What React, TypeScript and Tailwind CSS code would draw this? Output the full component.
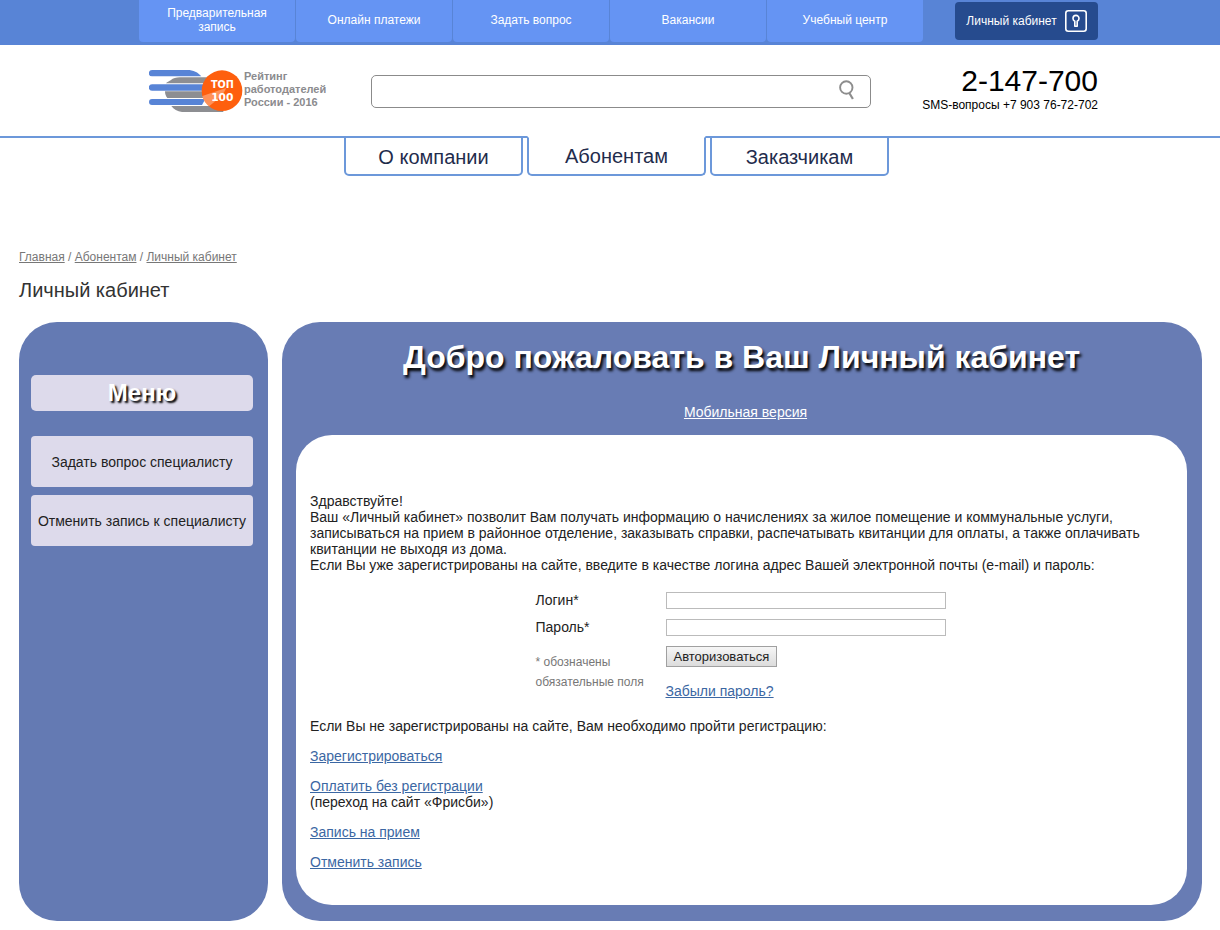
import { useState } from "react";

const topLinks = [
  "Предварительная запись",
  "Онлайн платежи",
  "Задать вопрос",
  "Вакансии",
  "Учебный центр",
];

const tabs = [
  { title: "О компании", active: false },
  { title: "Абонентам", active: true },
  { title: "Заказчикам", active: false },
];

const sideMenu = ["Задать вопрос специалисту", "Отменить запись к специалисту"];

const TopBar = () => (
  <div className="bg-[#5884d6] pl-4">
    <div className="max-w-[960px] h-[45px] mx-auto pl-px flex items-start">
      <nav className="flex flex-1 gap-px mr-8">
        {topLinks.map((link) => (
          <a
            key={link}
            href="#"
            className="flex-1 h-[42px] px-4 pb-[2px] flex items-center justify-center text-center text-xs leading-[14px] text-white bg-[#6594f3] rounded-b"
          >
            {link}
          </a>
        ))}
      </nav>
      <a
        href="#"
        className="w-[143px] h-[38px] mt-[2px] flex items-center justify-center gap-2 rounded bg-[#264b8e] text-white text-xs"
      >
        Личный кабинет
        <svg width="22" height="22" viewBox="0 0 22 22" fill="none" stroke="#fff">
          <rect x="0.8" y="0.8" width="20.4" height="20.4" rx="2.5" strokeWidth="1.6" />
          <path
            d="M9.8 16.2V11.2C8.6 10.5 8 9.6 8 8.4a3 3 0 0 1 6 0c0 1.2-.6 2.1-1.8 2.8v5z"
            strokeWidth="1.6"
            strokeLinejoin="round"
          />
        </svg>
      </a>
    </div>
  </div>
);

const Logo = () => (
  <a href="#" className="flex items-center text-[#8b8b8e]">
    <svg width="95" height="45" viewBox="27 27 285 135">
      <path
        d="M92 61C100 54 108 52 120 52H230V70H78C82 66 86 64 92 61zM75 94H230V114H82C77 108 75 102 75 94zM94 138H250V156H126C112 154 101 148 94 138z"
        fill="#8d8e92"
      />
      <path
        d="M36 30H142C160 30 174 37 184 49H36A9 9 0 0 1 36 30zM36 73H200V92H36A9 9 0 0 1 36 73zM36 117H196L186 135H36A9 9 0 0 1 36 117z"
        fill="#5884d6"
      />
      <circle cx="246" cy="92" r="61" fill="#fe5f0e" />
      <path d="M187 108L258 84C254 100 240 112 207 139C196 130 190 121 187 108z" fill="#ffb48c" opacity="0.6" />
      <g fill="#fff" fontFamily="DejaVu Sans, sans-serif" fontWeight="700" textAnchor="middle">
        <text x="247" y="85" fontSize="29">ТОП</text>
        <text x="247" y="122" fontSize="32">100</text>
      </g>
    </svg>
    <span className="w-[83px] pb-1 font-bold text-[11px] leading-[13px] whitespace-nowrap">
      Рейтинг
      <br />
      работодателей
      <br />
      России - 2016
    </span>
  </a>
);

const Header = () => {
  const [query, setQuery] = useState("");

  return (
    <header className="pl-4 border-b-2 border-[#6c98da]">
      <div className="max-w-[960px] h-[91px] mx-auto pl-[11px] pt-[2px] flex items-center">
        <Logo />
        <form
          role="search"
          onSubmit={(e) => e.preventDefault()}
          className="flex flex-1 h-[33px] ml-11 mr-[51px] border border-[#8b8b8b] rounded-[5px]"
        >
          <input
            type="search"
            aria-label="Поиск"
            value={query}
            onChange={(e) => setQuery(e.target.value)}
            className="flex-1 min-w-0 px-2 text-sm outline-none"
          />
          <button type="submit" aria-label="Найти" className="px-[15px] pb-1">
            <svg width="16" height="20" viewBox="0 0 16 20" fill="none" stroke="#8d8d8d">
              <circle cx="7.3" cy="7.5" r="6.2" strokeWidth="1.9" />
              <path d="M10.3 13l3.6 6" strokeWidth="2.2" />
            </svg>
          </button>
        </form>
        <div className="pb-[5px] text-right text-black whitespace-nowrap">
          <div className="text-[30px] leading-8">2-147-700</div>
          <div className="text-xs">SMS-вопросы +7 903 76-72-702</div>
        </div>
      </div>
    </header>
  );
};

const SectionTabs = () => (
  <nav className="flex justify-center gap-1 pl-[13px] -mt-[2px]">
    {tabs.map((tab) => (
      <a
        key={tab.title}
        href="#"
        className={
          tab.active
            ? "w-[179px] h-10 flex items-center justify-center text-xl text-[#1f2c4c] bg-white border-2 border-t-white border-[#6c98da] rounded-b-[5px]"
            : "w-[179px] h-10 pt-[2px] flex items-center justify-center text-xl text-[#1f2c4c] border-2 border-[#6c98da] rounded-b-[5px]"
        }
      >
        {tab.title}
      </a>
    ))}
  </nav>
);

const Sidebar = () => (
  <aside className="w-[249px] shrink-0 pl-3 pr-[15px] pt-[53px] rounded-[38px] bg-[#647ab3]">
    <h2 className="h-9 mb-[25px] flex items-center justify-center rounded-[5px] bg-[#dddaeb] text-white text-2xl font-bold [text-shadow:2px_2px_2px_#000]">
      Меню
    </h2>
    <div className="flex flex-col gap-2">
      {sideMenu.map((item) => (
        <a
          key={item}
          href="#"
          className="h-[51px] flex items-center justify-center whitespace-nowrap rounded bg-[#dddaeb] text-sm text-[#222]"
        >
          {item}
        </a>
      ))}
    </div>
  </aside>
);

const LoginForm = () => {
  const [formData, setFormData] = useState({ login: "", password: "" });

  const handleChange = (e: React.ChangeEvent<HTMLInputElement>) => {
    const { name, value } = e.target;
    setFormData((prev) => ({ ...prev, [name]: value }));
  };

  return (
    <form
      onSubmit={(e) => e.preventDefault()}
      className="grid grid-cols-[110px_280px] justify-center gap-x-5 gap-y-[10px] my-[19px]"
    >
      <label htmlFor="login">Логин*</label>
      <input
        id="login"
        type="text"
        name="login"
        value={formData.login}
        onChange={handleChange}
        className="h-[17px] px-1 border border-[#bbb]"
      />
      <label htmlFor="password">Пароль*</label>
      <input
        id="password"
        type="password"
        name="password"
        value={formData.password}
        onChange={handleChange}
        className="h-[17px] px-1 border border-[#bbb]"
      />
      <p className="pt-[6px] text-xs leading-5 text-[#777] whitespace-nowrap">
        * обозначены
        <br />
        обязательные поля
      </p>
      <div className="flex flex-col items-start gap-4">
        <button
          type="submit"
          className="h-[21px] px-[7px] border border-[#a0a0a0] bg-linear-to-b from-[#f6f6f6] to-[#dcdcdc] text-[13px] leading-4"
        >
          Авторизоваться
        </button>
        <a href="#" className="text-[#3b67a3] underline">
          Забыли пароль?
        </a>
      </div>
    </form>
  );
};

const Cabinet = () => (
  <main className="flex-1 min-w-0 pl-[14px] pr-[15px] pb-4 rounded-[38px] bg-[#687cb4] text-sm leading-4">
    <h2 className="pt-3 text-center text-white text-[32px] leading-[46px] font-bold [text-shadow:2px_3px_3px_#000]">
      Добро пожаловать в Ваш Личный кабинет
    </h2>
    <p className="mt-6 mb-[15px] pl-2 text-center">
      <a href="#" className="text-white underline">
        Мобильная версия
      </a>
    </p>
    <div className="pl-[14px] pr-4 pt-[58px] pb-[35px] rounded-[36px] bg-white text-[#222]">
      <p>
        Здравствуйте!
        <br />
        Ваш «Личный кабинет» позволит Вам получать информацию о начислениях за жилое помещение и
        коммунальные услуги, записываться на прием в районное отделение, заказывать справки,
        распечатывать квитанции для оплаты, а также оплачивать квитанции не выходя из дома.
        <br />
        Если Вы уже зарегистрированы на сайте, введите в качестве логина адрес Вашей электронной
        почты (e-mail) и пароль:
      </p>
      <LoginForm />
      <div className="flex flex-col gap-[14px]">
        <p>Если Вы не зарегистрированы на сайте, Вам необходимо пройти регистрацию:</p>
        <p>
          <a href="#" className="text-[#3b67a3] underline">Зарегистрироваться</a>
        </p>
        <p>
          <a href="#" className="text-[#3b67a3] underline">Оплатить без регистрации</a>
          <br />
          (переход на сайт «Фрисби»)
        </p>
        <p>
          <a href="#" className="text-[#3b67a3] underline">Запись на прием</a>
        </p>
        <p>
          <a href="#" className="text-[#3b67a3] underline">Отменить запись</a>
        </p>
      </div>
    </div>
  </main>
);

const App = () => (
  <div className="min-h-screen bg-white font-['Liberation_Sans',Arial,sans-serif]">
    <TopBar />
    <Header />
    <SectionTabs />
    <div className="pl-[19px] pr-[18px] pt-[73px] pb-[9px]">
      <nav className="text-xs text-[#777]">
        <a href="#" className="underline">Главная</a> / <a href="#" className="underline">Абонентам</a>{" "}
        / <a href="#" className="underline">Личный кабинет</a>
      </nav>
      <h1 className="mt-[11px] mb-[18px] text-xl text-[#333]">Личный кабинет</h1>
      <div className="flex gap-[14px]">
        <Sidebar />
        <Cabinet />
      </div>
    </div>
  </div>
);

export default App;
